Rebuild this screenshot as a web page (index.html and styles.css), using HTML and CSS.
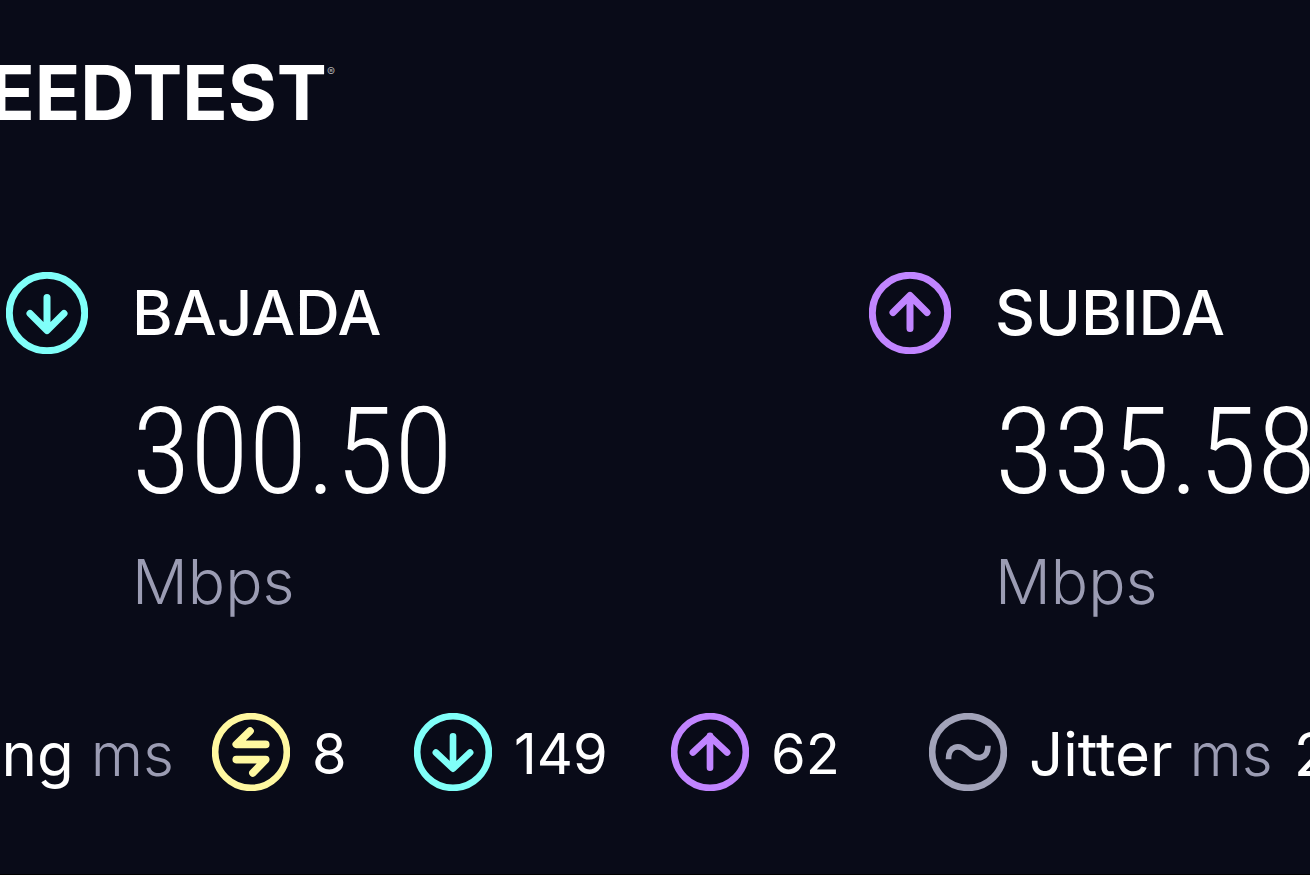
FILE: index.html
```html
<!DOCTYPE html>
<html lang="es">
<head>
    <meta charset="UTF-8">
    <meta name="viewport" content="width=device-width, initial-scale=1.0">
    <title>Speedtest</title>
    <link rel="stylesheet" href="styles.css">
</head>
<body>
    <header class="header">
        <div class="logo">SPEEDTEST<sup class="mark">®</sup></div>
    </header>
    <main>
        <section class="results">
            <div class="result">
                <svg class="icon down" viewBox="0 0 82 82">
                    <circle cx="41" cy="41" r="37.7"/>
                    <path d="M41 25.500V58M24 41.500L41 58.500L58 41.500"/>
                </svg>
                <h2 class="label">BAJADA</h2>
                <div class="speed">300.50</div>
                <div class="unit">Mbps</div>
            </div>
            <div class="result">
                <svg class="icon up" viewBox="0 0 82 82">
                    <circle cx="41" cy="41" r="37.7"/>
                    <path d="M41 56.500V24M24 40.500L41 23.500L58 40.500"/>
                </svg>
                <h2 class="label">SUBIDA</h2>
                <div class="speed">335.58</div>
                <div class="unit">Mbps</div>
            </div>
        </section>
        <section class="latency">
            <div class="item ping">
                <span class="name">Ping <span class="ms">ms</span></span>
            </div>
            <div class="item">
                <svg class="icon idle" viewBox="0 0 82 82">
                    <circle cx="41" cy="41" r="37.7"/>
                    <path class="arrows" d="M40 19L25.500 33H56.500M25.500 49H56.500L43 63"/>
                </svg>
                <span>8</span>
            </div>
            <div class="item">
                <svg class="icon down" viewBox="0 0 82 82">
                    <circle cx="41" cy="41" r="37.7"/>
                    <path d="M41 24.500V58M23 41.500L41 58.500L59 41.500"/>
                </svg>
                <span>149</span>
            </div>
            <div class="item">
                <svg class="icon up" viewBox="0 0 82 82">
                    <circle cx="41" cy="41" r="37.7"/>
                    <path d="M41 57.500V24M23 41.500L41 24.500L59 41.500"/>
                </svg>
                <span>62</span>
            </div>
            <div class="item">
                <svg class="icon jitter" viewBox="0 0 82 82">
                    <circle cx="41" cy="41" r="37.7"/>
                    <path class="wave" d="M20.500 48.500C20.500 35 31 31.500 41 41C51 51 62 48 62 34.500"/>
                </svg>
                <span class="name">Jitter <span class="ms">ms</span> 2</span>
            </div>
        </section>
    </main>
</body>
</html>
```
FILE: styles.css
```css
body, html {
    margin: 0;
    padding: 0;
    overflow: hidden;
    background-color: #090b18;
}

body {
    box-sizing: border-box;
    min-height: 100vh;
    border-bottom: 1px solid #000;
    color: #fff;
    font-family: Inter, "Liberation Sans", sans-serif;
}

/* the logo runs off the left edge */
.header {
    display: flex;
    justify-content: flex-end;
    width: 335px;
    padding-top: 57px;
}

.logo {
    display: flex;
    font-size: 75px;
    line-height: 72px;
    font-weight: 650;
}

.mark {
    font-size: 12px;
    line-height: 30px;
    font-weight: 400;
    color: #aaa;
}

.results {
    display: grid;
    grid-template-columns: minmax(0, 863fr) minmax(0, 447fr);
    margin-top: 143px;
}

.result {
    display: grid;
    grid-template-columns: 82px 1fr;
    column-gap: 44px;
    row-gap: 36px;
    padding-left: 6px;
}

.icon {
    flex: none;
    width: 78px;
    height: 78px;
    fill: none;
    stroke: currentColor;
    stroke-width: 7;
    stroke-linecap: round;
    stroke-linejoin: round;
}

.result .icon {
    width: 82px;
    height: 82px;
}

.down {
    color: #80fff9;
}

.up {
    color: #c185ff;
}

.idle {
    color: #fff8a0;
}

.jitter {
    color: #a2a3b9;
}

.arrows {
    stroke-width: 8;
}

.wave {
    stroke-width: 6;
    stroke-linecap: butt;
}

.label {
    margin: 0;
    font-size: 62px;
    line-height: 82px;
    font-weight: 500;
}

.speed {
    grid-column: 2;
    font-family: "Roboto Condensed", Roboto, sans-serif;
    font-size: 120px;
    line-height: 124px;
    font-weight: 300;
    white-space: nowrap;
}

.unit {
    grid-column: 2;
    margin-top: -4px;
    color: #9b9cb3;
    font-size: 62px;
    line-height: 72px;
    font-weight: 300;
}

.latency {
    display: grid;
    grid-template-columns: minmax(0, 212fr) minmax(0, 202fr) minmax(0, 257fr) minmax(0, 258fr) minmax(0, 381fr);
    margin-top: 95px;
    font-size: 56px;
    line-height: 82px;
}

.item {
    display: flex;
    align-items: flex-start;
    gap: 22px;
    white-space: nowrap;
}

.ping {
    justify-content: flex-end;
    padding-right: 34px;
}

.name {
    font-size: 60px;
}

.ms {
    margin-right: 4px;
    color: #9b9cb3;
    font-weight: 300;
}
```
